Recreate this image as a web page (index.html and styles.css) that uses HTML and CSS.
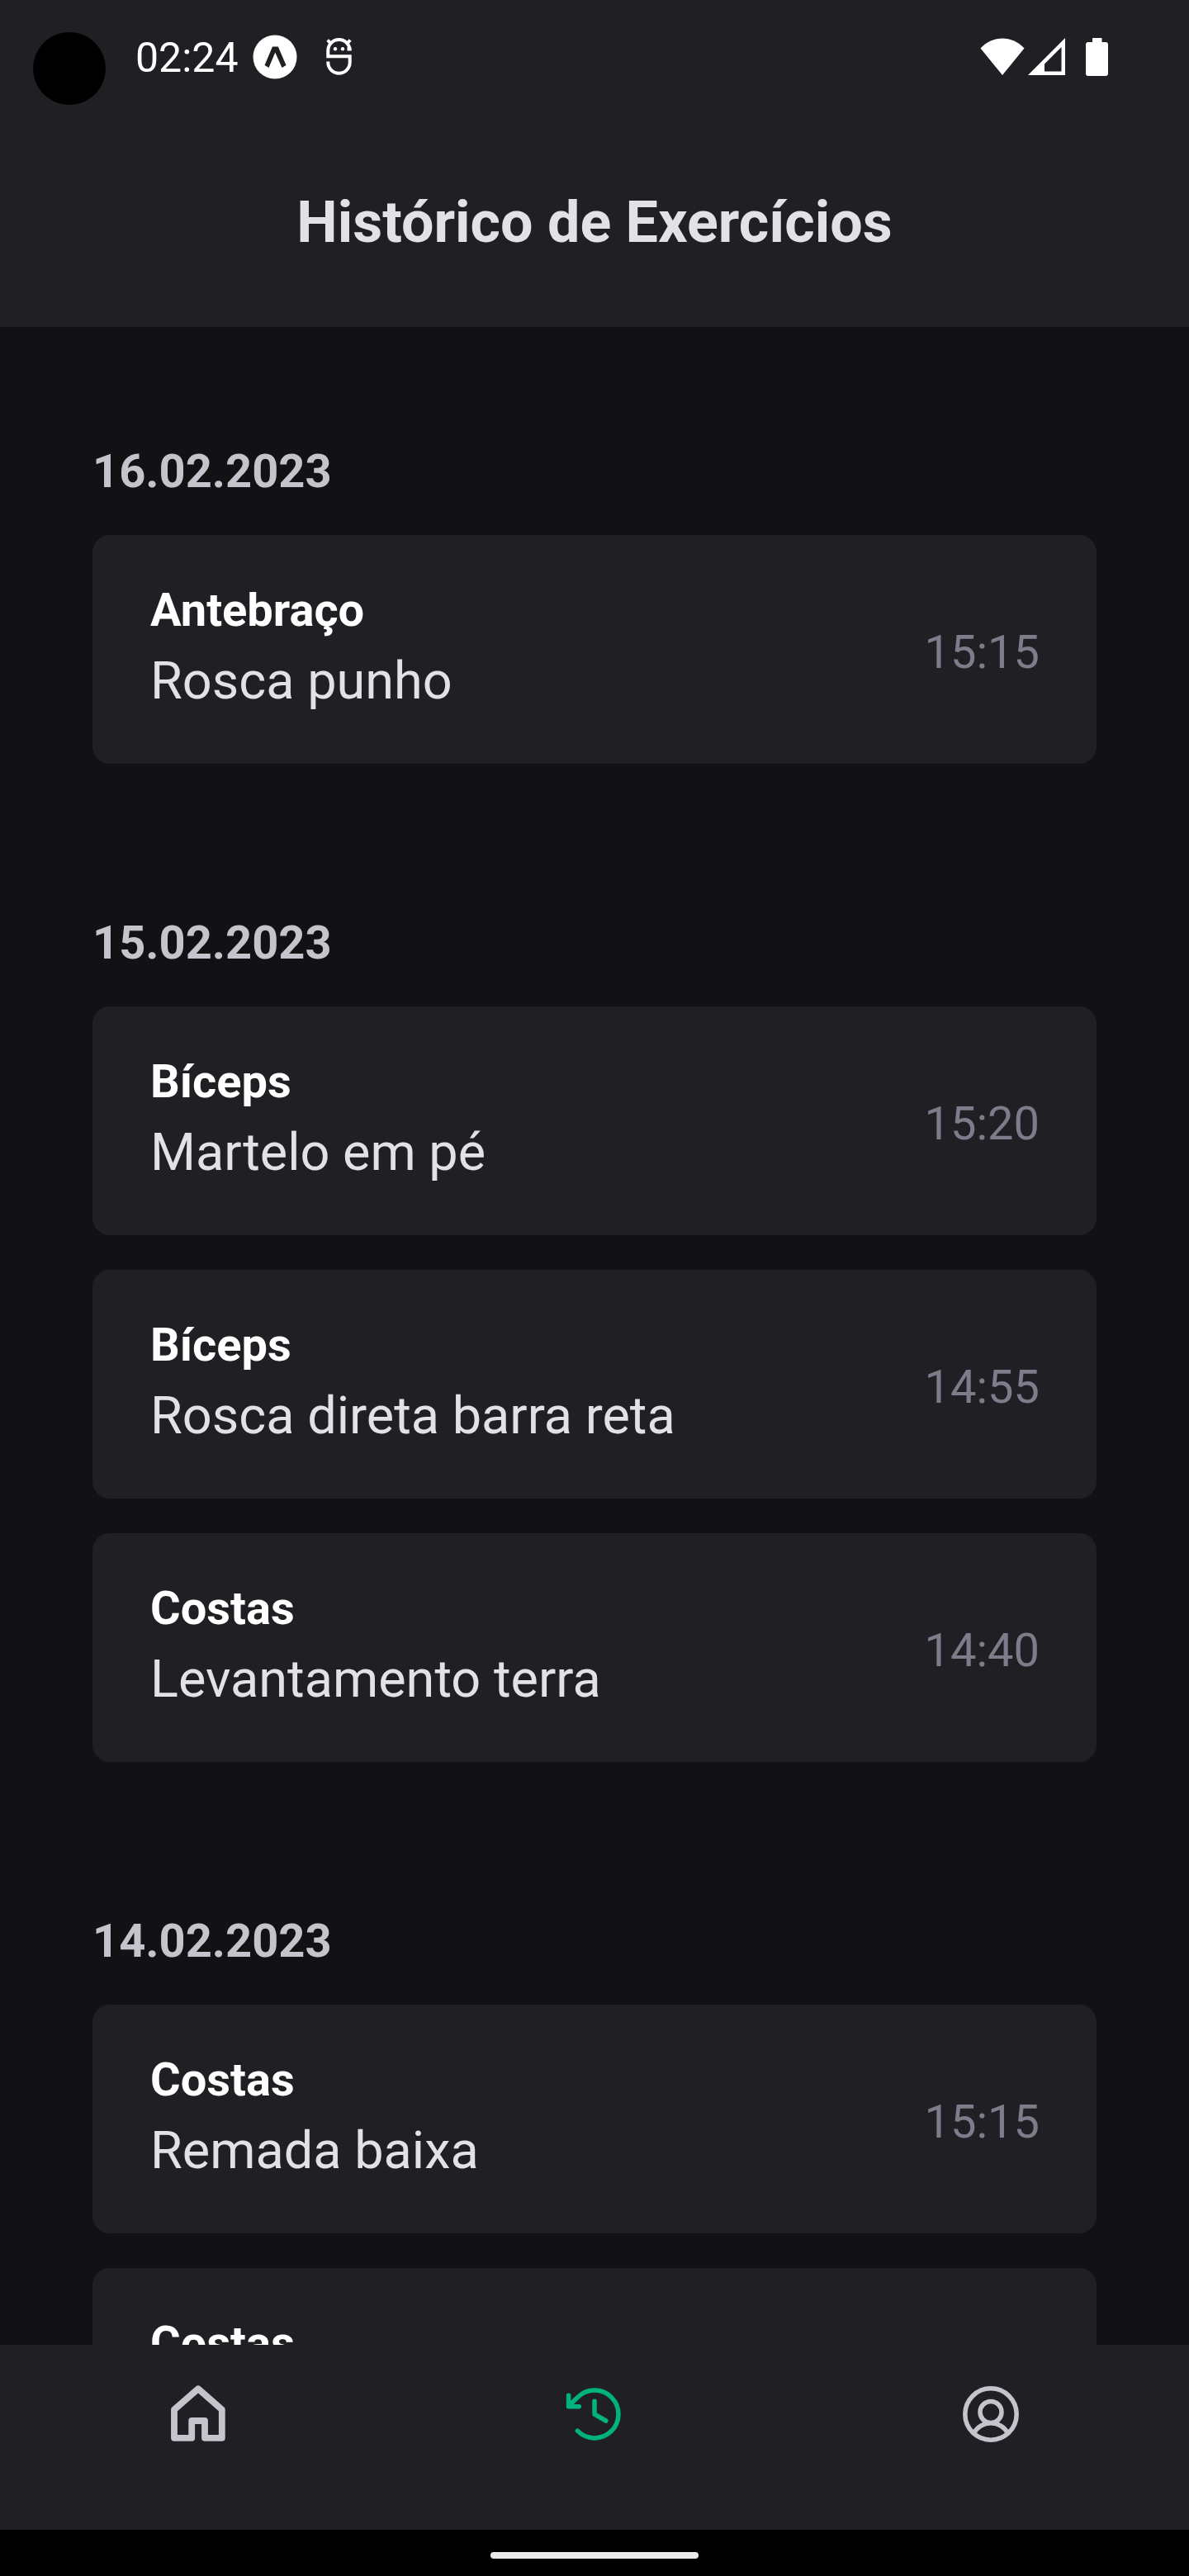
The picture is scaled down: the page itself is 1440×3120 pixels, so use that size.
FILE: index.html
```html
<!DOCTYPE html>
<html lang="pt-BR">
<head>
<meta charset="utf-8">
<title>Histórico de Exercícios</title>
<link rel="stylesheet" href="styles.css">
</head>
<body>
<div class="screen">
  <header class="header">
    <div class="status">
      <span class="camera"></span>
      <span class="clock">02:24</span>
      <svg class="expo" viewBox="0 0 54 54"><circle cx="27" cy="27" r="26.5" fill="#fff"/><path d="M24 14.5h6.8L40.5 37l-5 3L27.3 21.5 19.5 40l-5-3z" fill="#202024"/></svg>
      <svg class="debug" viewBox="0 0 32 46" fill="none" stroke="#fff" stroke-width="4"><path d="M25.500 13.600H30.700M28.700 15.200A13.200 13.200 0 0 0 2.300 15.200V22.300H28.700V29.500A13.200 13.200 0 0 1 2.300 29.500V28.500M1.800 2.500L5.500 6.500M29.200 2.500L25.500 6.500"/><circle cx="11" cy="13.300" r="2.200" fill="#fff" stroke="none"/><circle cx="20" cy="13.300" r="2.200" fill="#fff" stroke="none"/></svg>
      <svg class="wifi" viewBox="0 0 54 46"><path d="M.5 12.500C15-3.500 39-3.500 53.500 12.500L27 45z" fill="#fff"/></svg>
      <svg class="signal" viewBox="0 0 45 45"><path d="M45 0v45H0zM40.500 11L20 31.500V40.500H40.500z" fill="#fff" fill-rule="evenodd"/></svg>
      <svg class="battery" viewBox="0 0 27 46"><path d="M8 0h11.500v5H24a3 3 0 0 1 3 3v35a3 3 0 0 1-3 3H3a3 3 0 0 1-3-3V8a3 3 0 0 1 3-3h5z" fill="#fff"/></svg>
    </div>
    <h1 class="title">Histórico de Exercícios</h1>
  </header>

  <main class="history">
    <section class="day">
      <h2 class="date">16.02.2023</h2>
      <article class="card"><div><h3 class="group">Antebraço</h3><p class="exercise">Rosca punho</p></div><time class="time">15:15</time></article>
    </section>
    <section class="day">
      <h2 class="date">15.02.2023</h2>
      <article class="card"><div><h3 class="group">Bíceps</h3><p class="exercise">Martelo em pé</p></div><time class="time">15:20</time></article>
      <article class="card"><div><h3 class="group">Bíceps</h3><p class="exercise">Rosca direta barra reta</p></div><time class="time">14:55</time></article>
      <article class="card"><div><h3 class="group">Costas</h3><p class="exercise">Levantamento terra</p></div><time class="time">14:40</time></article>
    </section>
    <section class="day">
      <h2 class="date">14.02.2023</h2>
      <article class="card"><div><h3 class="group">Costas</h3><p class="exercise">Remada baixa</p></div><time class="time">15:15</time></article>
      <article class="card"><div><h3 class="group">Costas</h3></div></article>
    </section>
  </main>

  <nav class="tabs">
    <a class="tab"><svg viewBox="0 0 84 84" stroke-width="7.800"><path d="M42 11.200L70.800 36.500V70.800H50V50H34.200V70.800H13V36.500z"/></svg></a>
    <a class="tab active"><svg viewBox="0 0 84 84" stroke-width="5.500"><path d="M10.600 19.300V32.700H23.300M10.600 32.700C14.500 28.700 17.500 25 21.600 21.600A28.900 28.900 0 1 1 21.400 62.200M42 26.200V42L55.800 50"/></svg></a>
    <a class="tab"><svg viewBox="0 0 84 84" stroke-width="5.500"><circle cx="42" cy="42" r="31.200"/><circle cx="42" cy="39.500" r="13"/><path d="M21.300 65.300a23.300 23.300 0 0 1 41.400 0"/></svg></a>
  </nav>
  <footer class="gesture"><span class="pill"></span></footer>
</div>
</body>
</html>
```
FILE: styles.css
```css
* { box-sizing: border-box; margin: 0; padding: 0; }
body { background: #121214; font-family: Roboto, "Liberation Sans", sans-serif; }
svg { display: block; flex: none; }

.screen { display: flex; flex-direction: column; width: 1440px; height: 3120px; overflow: hidden; }

.header { flex: none; height: 396px; background: #202024; }
.status { position: relative; display: flex; align-items: center; height: 137px; padding: 0 98px 0 164px; }
.camera { position: absolute; left: 40px; top: 39px; width: 88px; height: 88px; border-radius: 50%; background: #000; }
.clock { width: 142px; color: #fff; font-size: 50px; line-height: 58px; margin-top: 3px; }
.expo { width: 54px; height: 54px; }
.debug { width: 32px; height: 46px; margin-left: 35px; }
.wifi { width: 54px; height: 46px; margin-left: auto; }
.signal { width: 45px; height: 45px; margin-left: 4px; }
.battery { width: 27px; height: 46px; margin-left: 25px; }
.title { margin-top: 90px; color: #e1e1e6; font-size: 70px; font-weight: 700; line-height: 84px; text-align: center; }

.history { flex: 1; min-height: 0; overflow: hidden; display: flex; flex-direction: column; gap: 175px; padding: 133px 112px 0; }
.day { flex: none; display: flex; flex-direction: column; gap: 42px; }
.date { margin-bottom: -7px; color: #c4c4cc; font-size: 56px; font-weight: 700; line-height: 84px; }
.card { display: flex; justify-content: space-between; height: 277px; padding: 49px 69px 0 70px; border-radius: 21px; background: #202024; }
.group { color: #fff; font-size: 56px; font-weight: 700; line-height: 84px; }
.exercise { color: #e1e1e6; font-size: 63px; line-height: 87px; }
.time { margin-top: 51px; color: #7c7c8a; font-size: 56px; line-height: 84px; }

.tabs { flex: none; display: grid; grid-template-columns: repeat(3, 1fr); justify-items: center; height: 224px; padding-top: 42px; background: #202024; }
.tab { width: 84px; height: 84px; color: #c4c4cc; }
.tab svg { width: 84px; height: 84px; fill: none; stroke: currentColor; stroke-linecap: round; stroke-linejoin: round; }
.active { color: #00b37e; }
.gesture { flex: none; display: flex; justify-content: center; height: 56px; padding-top: 27px; background: #000; }
.pill { width: 252px; height: 8px; border-radius: 4px; background: #ebebeb; }
```
